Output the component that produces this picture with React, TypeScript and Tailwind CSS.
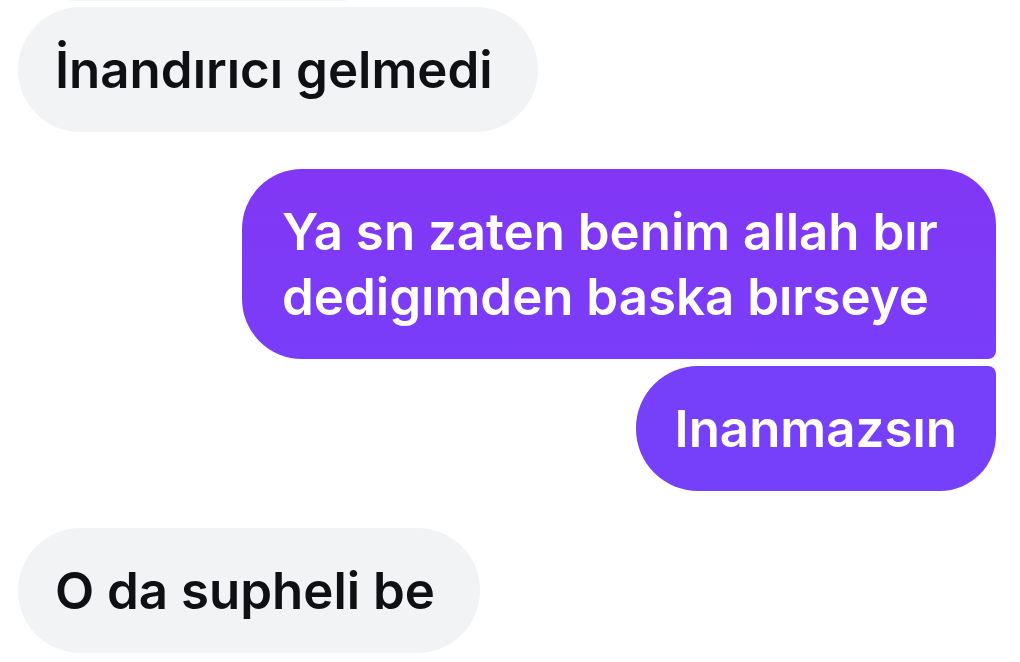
const font = { fontFamily: "Inter, 'Noto Sans', sans-serif" };

const Incoming = ({ text }: { text: string }) => (
  <div className="self-start rounded-full bg-[#f2f3f5] pl-[37px] pr-[45px] py-[30px] text-[#0e1014]">
    {text}
  </div>
);

export default function App() {
  return (
    <div
      className="flex h-[662px] w-[1020px] flex-col overflow-hidden bg-white pl-[18px] pr-[24px] text-[51px] font-semibold leading-[65px]"
      style={font}
    >
      {/* bottom edge of the previous message, cut off by the top of the screen */}
      <div className="-mt-[124px] mb-[6px] h-[125px] w-[380px] shrink-0 self-start rounded-b-[60px] bg-[#f2f3f5]" />

      <Incoming text="İnandırıcı gelmedi" />

      <div className="mt-[37px] flex flex-col items-end gap-[7px] text-white">
        <div className="w-[754px] rounded-tl-[60px] rounded-tr-[56px] rounded-br-[8px] rounded-bl-[60px] bg-linear-to-b from-[#8237f5] to-[#793df9] pl-[40px] pr-[30px] py-[30px]">
          Ya sn zaten benim allah bır
          <br />
          dedigımden baska bırseye
        </div>
        <div className="rounded-tl-[62px] rounded-tr-[8px] rounded-br-[56px] rounded-bl-[62px] bg-[#7640fb] px-[39px] py-[30px]">
          Inanmazsın
        </div>
      </div>

      <div className="mt-[37px] flex">
        <Incoming text="O da supheli be" />
      </div>
    </div>
  );
}
